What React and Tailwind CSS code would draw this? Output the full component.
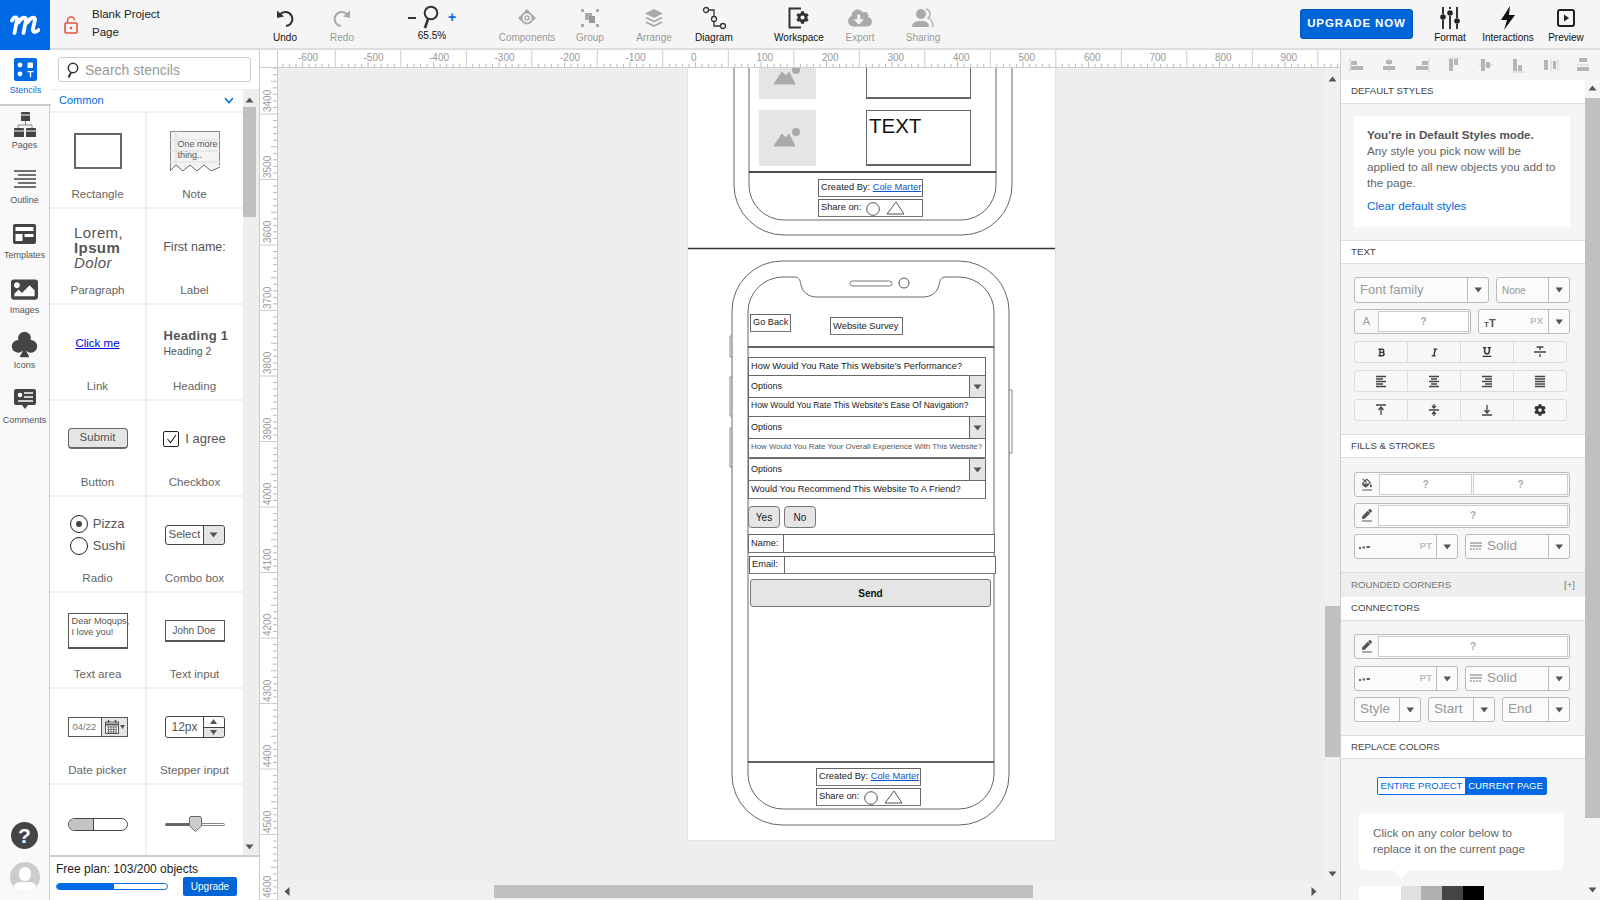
import React from 'react';
import { FaImage, FaCloudDownloadAlt, FaCog, FaFillDrip, FaPen, FaBold, FaItalic, FaUnderline } from 'react-icons/fa';
import { BsSuitClubFill } from 'react-icons/bs';

const Tri = ({ down, className = '' }) => (
  <svg width="9" height="6" viewBox="0 0 9 6" className={className}>
    <polygon points={down ? '0.5,0.5 8.5,0.5 4.5,5.5' : '0.5,5.5 8.5,5.5 4.5,0.5'} fill="#555" />
  </svg>
);

const ToolItem = ({ label, className = '', dim, icon }) => (
  <div className={`w-14 shrink-0 flex flex-col items-center ${className}`}>
    <div className="h-[28px] flex items-center justify-center">{icon}</div>
    <span className={`text-[10px] leading-[12px] whitespace-nowrap ${dim ? 'text-[#999]' : 'text-[#111]'}`}>{label}</span>
  </div>
);

const RailItem = ({ label, icon, active }) => (
  <div className={`flex flex-col items-center ${active ? 'h-[56px] pt-[4px] bg-white w-[51px] border-b-2 border-[#ccc] relative z-10' : 'h-[55px] pt-[3px]'}`}>
    <div className="h-[30px] flex items-center justify-center">{icon}</div>
    <span className={`text-[9px] leading-[12px] ${active ? 'text-[#0069e5]' : 'text-[#555]'}`}>{label}</span>
  </div>
);

const Cell = ({ label, children, right }) => (
  <div className={`h-24 shrink-0 flex flex-col items-center border-b-2 border-[#f0f0f0] ${right ? 'w-[96px] pr-[1px]' : 'w-[97px] border-r-2'}`}>
    <div className="h-[73px] pt-[4px] w-full flex items-center justify-center">{children}</div>
    <span className="text-[11.6px] leading-[16px] text-[#666]">{label}</span>
  </div>
);

const Header = ({ children, className = '' }) => (
  <div className={`h-[24px] shrink-0 bg-white border-y border-[#ddd] pl-[10px] flex items-center text-[9.7px] text-[#444] ${className}`}>{children}</div>
);

const Arrow = () => <svg width="9" height="6" viewBox="0 0 9 6"><polygon points="0.5,0.5 8,0.5 4.2,5.5" fill="#555" /></svg>;

const Drop = ({ className = '', arrow = 'w-[21px]', children }) => (
  <div className={`flex items-center h-full bg-[#fbfbfb] border border-[#bbb] rounded-[3px] ${className}`}>
    <div className="flex-1 min-w-0 h-full flex items-center">{children}</div>
    <div className={`h-full border-l border-[#bbb] flex items-center justify-center ${arrow}`}><Arrow /></div>
  </div>
);

const Swatch = ({ className = '' }) => (
  <div className={`h-[21px] bg-white border border-[#ccc] flex items-center justify-center text-[10px] font-bold text-[#aaa] ${className}`}>?</div>
);

const FormatRow = ({ icons, className = '' }) => (
  <div className={`ml-[13px] w-[213px] h-[22px] flex border border-[#ddd] rounded-[3px] bg-[#f7f7f7] ${className}`}>
    {icons.map((ic, i) => (
      <div key={i} className={`flex-1 flex items-center justify-center text-[#333] ${i ? 'border-l border-[#ddd]' : ''}`}>{ic}</div>
    ))}
  </div>
);

const L = ({ d }) => <svg width="14" height="14" viewBox="0 0 14 14"><path d={d} stroke="#444" strokeWidth="1.3" fill="none" /></svg>;

const AlignIcon = ({ d, bars }) => (
  <svg width="16" height="16" viewBox="0 0 16 16" className="shrink-0">
    <path d={d} stroke="#ddd" strokeWidth="1.4" fill="none" />
    <path d={bars} fill="#b5b5b5" />
  </svg>
);

const PtIcon = () => <svg width="12" height="4" viewBox="0 0 12 4"><path d="M0 3H2M3.500 2.500H6M7.500 2H11" stroke="#666" strokeWidth="2" /></svg>;
const SolidIcon = () => <svg width="12" height="9" viewBox="0 0 12 9"><path d="M0 1H12M0 4H12" stroke="#777" /><path d="M0 7H12" stroke="#777" strokeDasharray="2 1" /></svg>;
const PenSlot = () => <div className="w-[23px] flex justify-center"><div className="border-b-2 border-[#aaa] pb-[1px] leading-none"><FaPen size={10} color="#555" /></div></div>;

const Ruler = () => {
  const ticks = [];
  for (let i = -62; i <= 100; i++) ticks.push(411 + i * 6.55);
  const labels = [];
  for (let v = -600; v <= 900; v += 100) labels.push(v);
  return (
    <div className="relative h-[18px] flex-1 bg-white border-b border-[#ccc] overflow-hidden">
      <svg width="1063" height="18" className="absolute left-0 top-0">
        {ticks.map((x, i) => (
          <line key={i} x1={x} x2={x} y1={(i + 2) % 10 === 0 ? 0 : (i + 2) % 5 === 0 ? 12 : 14} y2="18" stroke={(i + 2) % 10 === 0 ? '#ccc' : '#bbb'} />
        ))}
      </svg>
      {labels.map((v) => (
        <span key={v} className="absolute top-[1px] text-[10px] leading-[14px] text-[#999]" style={{ left: 411 + v * 0.655 + 2 }}>{v}</span>
      ))}
    </div>
  );
};

const VRuler = () => {
  const ticks = [];
  for (let i = -60; i <= 100; i++) ticks.push(308 + i * 6.55);
  const labels = [];
  for (let v = 3400; v <= 4600; v += 100) labels.push(v);
  return (
    <div className="relative w-[19px] shrink-0 bg-white border-x border-[#ccc] overflow-hidden">
      <svg width="19" height="832" className="absolute left-0 top-0">
        {ticks.map((y, i) => (
          <line key={i} y1={y} y2={y} x1={i % 10 === 0 ? 0 : i % 5 === 0 ? 11 : 13} x2="18" stroke={i % 10 === 0 ? '#ccc' : '#bbb'} />
        ))}
      </svg>
      {labels.map((v) => (
        <span key={v} className="absolute left-[1px] text-[10px] leading-[14px] text-[#999] [writing-mode:vertical-rl] rotate-180 -translate-y-full" style={{ top: 308 + (v - 3800) * 0.655 - 2 }}>{v}</span>
      ))}
    </div>
  );
};

const wb = 'absolute bg-white border border-[#666] border-b-[#777] flex items-center text-[#222] whitespace-nowrap';

const Opt = ({ className }) => (
  <div className={`${wb} pl-[2px] text-[9px] rounded-[2px] ${className}`}>
    Options
    <div className="absolute right-0 top-0 bottom-0 w-[16px] bg-[#e5e5e5] border-l border-[#666] flex items-center justify-center"><Tri down /></div>
  </div>
);

const Footer = ({ a, b }) => (
  <>
    <div className={`${wb} pl-[2px] w-[105px] h-[18px] text-[9.3px] ${a}`}>
      Created By:&nbsp;<span className="text-[#0b57d0] underline">Cole Marter</span>
    </div>
    <div className={`${wb} pl-[2px] w-[105px] h-[18px] text-[9.3px] ${b}`}>
      Share on:
      <svg width="46" height="16" className="ml-[4px]" viewBox="0 0 46 16">
        <circle cx="8" cy="9" r="6.3" fill="none" stroke="#555" />
        <polygon points="31,2 39,14 22,14" fill="none" stroke="#555" />
      </svg>
    </div>
  </>
);

const Mountain = () => (
  <svg width="27" height="20" viewBox="0 0 27 20"><path d="M0 18 L8 6 L12 10 L15 6 L21 18Z" fill="#aaa" stroke="#aaa" strokeLinejoin="round" /><circle cx="22" cy="4" r="4" fill="#aaa" /></svg>
);

export default function App() {
  return (
    <div className="w-[1600px] h-[900px] overflow-hidden flex flex-col bg-[#eee] [font-family:'Liberation_Sans',Arial,sans-serif]">
      {/* top bar */}
      <div className="h-[50px] shrink-0 bg-[#f5f5f5] border-b-2 border-[#ddd] flex items-start">
        <div className="w-[50px] h-[50px] shrink-0 bg-[#0069e5] flex items-center justify-center">
          <svg width="30" height="20" viewBox="0 0 30 20"><path d="M2 5.500C4 1.500 7.500 1.500 7 5L4.500 18M8.500 7.500C11 2.500 16.500 1 16 5L13.500 18M17.500 7.500C20 2.500 25.500 1 25 5L23 13.500C22.500 17.500 25.500 18 28.500 15" fill="none" stroke="#fff" strokeWidth="3.800" strokeLinecap="round" /></svg>
        </div>
        <div className="w-[42px] h-[50px] flex items-center justify-center shrink-0">
          <svg width="14" height="18" viewBox="0 0 14 18"><path d="M3.500 7V4.500a3.500 3.500 0 0 1 7 0" fill="none" stroke="#e5533d" strokeWidth="1.500" /><rect x="1" y="7" width="12" height="10" rx="1" fill="none" stroke="#e5533d" strokeWidth="1.600" /><circle cx="7" cy="12" r="1.300" fill="#e5533d" /></svg>
        </div>
        <div className="w-[165px] shrink-0 pt-[5px] text-[11.5px] leading-[18px] text-[#222]">Blank Project<br />Page</div>
        <ToolItem label="Undo" className="mt-[4px]" icon={<svg width="22" height="20" viewBox="0 0 22 20"><path d="M6 6.500A7 7 0 1 1 12 18" fill="none" stroke="#333" strokeWidth="2" /><polygon points="3,2.500 3,10 10,8.500" fill="#333" /></svg>} />
        <ToolItem label="Redo" dim className="mt-[4px] ml-[1px]" icon={<svg width="22" height="20" viewBox="0 0 22 20"><path d="M16 6.500A7 7 0 1 0 10 18" fill="none" stroke="#aaa" strokeWidth="2" /><polygon points="19,2.500 19,10 12,8.500" fill="#aaa" /></svg>} />
        <div className="w-[60px] ml-[32px] shrink-0 flex flex-col items-center mt-[2px]">
          <div className="h-[30px] flex items-center gap-[5px]">
            <div className="w-[8px] h-[2px] bg-[#333] mt-[1px]" />
            <svg width="18" height="26" viewBox="0 0 18 26"><circle cx="10" cy="9" r="6.300" fill="none" stroke="#333" strokeWidth="2" /><path d="M7 15L4 24" stroke="#333" strokeWidth="2.600" /></svg>
            <span className="text-[#0069e5] text-[14px] leading-none font-bold ml-[4px]">+</span>
          </div>
          <span className="text-[10px] leading-[12px] text-[#111] -mt-[2px]">65.5%</span>
        </div>
        <ToolItem label="Components" dim className="mt-[4px] ml-[37px]" icon={<svg width="20" height="20" viewBox="0 0 20 20"><circle cx="10" cy="10" r="5.500" fill="none" stroke="#aaa" strokeWidth="2" /><circle cx="10" cy="10" r="2" fill="none" stroke="#aaa" strokeWidth="1.500" /><path d="M1 10l3-3v6zM19 10l-3-3v6zM10 1l3 3h-6z" fill="#aaa" /></svg>} />
        <ToolItem label="Group" dim className="mt-[4px] ml-[7px]" icon={<svg width="18" height="18" viewBox="0 0 18 18" fill="#aaa"><rect x="0" y="0" width="3" height="3" /><rect x="15" y="0" width="3" height="3" /><rect x="0" y="15" width="3" height="3" /><rect x="15" y="15" width="3" height="3" /><rect x="4" y="4" width="7" height="7" /><rect x="8" y="7" width="6" height="7" fill="#999" /></svg>} />
        <ToolItem label="Arrange" dim className="mt-[4px] ml-[8px]" icon={<svg width="18" height="19" viewBox="0 0 18 19" fill="#aaa"><path d="M9 0L18 4.500L9 9L0 4.500Z" /><path d="M2 8L9 11.500L16 8L18 9L9 13.500L0 9Z" /><path d="M2 12.500L9 16L16 12.500L18 13.500L9 18L0 13.500Z" /></svg>} />
        <ToolItem label="Diagram" className="mt-[4px] ml-[4px]" icon={<svg width="24" height="24" viewBox="0 0 24 24"><circle cx="4" cy="4" r="2.500" fill="none" stroke="#333" strokeWidth="1.300" /><circle cx="12" cy="13" r="2.500" fill="none" stroke="#333" strokeWidth="1.300" /><circle cx="21" cy="20" r="2.500" fill="none" stroke="#333" strokeWidth="1.300" /><path d="M6.500 4H12V10.500M12 15.500V20H18.500" fill="none" stroke="#333" strokeWidth="1.300" /></svg>} />
        <ToolItem label="Workspace" className="mt-[4px] ml-[29px]" icon={<div className="relative"><svg width="22" height="22" viewBox="0 0 22 22"><path d="M13 1.500H1.500V20.500H13" fill="none" stroke="#333" strokeWidth="2" /></svg><FaCog size={13} color="#333" className="absolute left-[8px] top-[4px]" /></div>} />
        <ToolItem label="Export" dim className="mt-[4px] ml-[5px]" icon={<FaCloudDownloadAlt size={24} color="#aaa" />} />
        <ToolItem label="Sharing" dim className="mt-[4px] ml-[7px]" icon={<svg width="22" height="22" viewBox="0 0 22 22" fill="#aaa"><circle cx="9" cy="7" r="5" /><path d="M0 20c0-5 4-6 9-6s8 1 8 6z" /><path d="M14 2a5 5 0 0 1 2 9c3 1 5 4 5 9" fill="none" stroke="#aaa" strokeWidth="1.300" /></svg>} />
        <div className="w-[113px] ml-[349px] mt-[9px] h-[30px] shrink-0 rounded-[3px] bg-[#0065d6] border border-[#0058c0] flex items-center justify-center text-white text-[11.5px] font-bold tracking-[0.9px]">UPGRADE&nbsp;NOW</div>
        <ToolItem label="Format" className="mt-[4px] ml-[9px]" icon={<svg width="20" height="22" viewBox="0 0 20 22"><path d="M3 0V7M3 13V22M10 0V2M10 9V22M17 0V11M17 17V22" stroke="#222" strokeWidth="1.800" /><circle cx="3" cy="10" r="2.800" fill="#222" /><circle cx="10" cy="6" r="2.800" fill="#222" /><circle cx="17" cy="14" r="2.800" fill="#222" /></svg>} />
        <ToolItem label="Interactions" className="mt-[4px] ml-[2px]" icon={<svg width="16" height="24" viewBox="0 0 16 24"><polygon points="10,0 1,14 7,14 4,24 15,9 9,9" fill="#111" /></svg>} />
        <ToolItem label="Preview" className="mt-[4px] ml-[2px]" icon={<svg width="20" height="20" viewBox="0 0 20 20"><rect x="2" y="2" width="16" height="16" rx="2" fill="none" stroke="#222" strokeWidth="2" /><polygon points="8,6.500 13,10 8,13.500" fill="#222" /></svg>} />
      </div>

      <div className="flex-1 min-h-0 flex">
        {/* rail */}
        <div className="w-[50px] shrink-0 bg-[#f9f9f9] border-r border-[#ccc] flex flex-col items-stretch">
          <RailItem active label="Stencils" icon={<svg width="23" height="23" viewBox="0 0 23 23"><rect width="23" height="23" rx="2" fill="#0069e5" /><circle cx="6" cy="7" r="2.400" fill="#fff" /><rect x="13.500" y="4.500" width="5.500" height="5.500" rx="1" fill="#fff" /><circle cx="6" cy="16" r="2.400" fill="#fff" /><path d="M13.500 13h6v1.200h-2.300v5h-1.400v-5h-2.300z" fill="#fff" /></svg>} />
          <RailItem label="Pages" icon={<svg width="24" height="25" viewBox="0 0 24 25"><path d="M9 0H16a1 1 0 0 1 1 1V9H8V1a1 1 0 0 1 1-1Z" fill="#444" /><path d="M8 3H17" stroke="#fff" /><path d="M12.500 9V13M5 16V13H19V16" fill="none" stroke="#888" /><path d="M2 16H10a1 1 0 0 1 1 1V25H1V17a1 1 0 0 1 1-1ZM14 16H22a1 1 0 0 1 1 1V25H13V17a1 1 0 0 1 1-1Z" fill="#444" /><path d="M1 19H11M13 19H23" stroke="#fff" /></svg>} />
          <RailItem label="Outline" icon={<svg width="24" height="18" viewBox="0 0 24 18"><path d="M1 1H23M5 5H23M1 9H23M5 13H23M1 17H23" stroke="#444" strokeWidth="1.600" /></svg>} />
          <RailItem label="Templates" icon={<svg width="23" height="20" viewBox="0 0 23 20"><rect width="23" height="20" rx="2" fill="#444" /><rect x="2.500" y="3" width="18" height="4" fill="#fff" /><rect x="2.500" y="10" width="7" height="7" fill="#fff" /><rect x="11.500" y="10" width="9" height="3" fill="#fff" /></svg>} />
          <RailItem label="Images" icon={<FaImage size={27} color="#444" />} />
          <RailItem label="Icons" icon={<BsSuitClubFill size={29} color="#444" />} />
          <RailItem label="Comments" icon={<svg width="22" height="21" viewBox="0 0 22 21"><path d="M2 0H20a2 2 0 0 1 2 2V14a2 2 0 0 1-2 2H14L11 20L8 16H2a2 2 0 0 1-2-2V2a2 2 0 0 1 2-2Z" fill="#444" /><circle cx="6" cy="6" r="2.300" fill="#fff" /><path d="M10 4H19M10 8H19M4 12H19" stroke="#fff" strokeWidth="1.500" /></svg>} />
          <div className="flex-1" />
          <div className="w-[27px] h-[27px] mx-auto rounded-full bg-[#444] text-white text-[21px] font-bold flex items-center justify-center">?</div>
          <div className="w-[30px] h-[30px] mx-auto mt-[13px] mb-[8px] rounded-full bg-[#ccc] overflow-hidden relative">
            <div className="absolute left-[9px] top-[5px] w-[12px] h-[14px] rounded-full bg-white" />
            <div className="absolute left-[3px] top-[20px] w-[24px] h-[14px] rounded-full bg-white" />
          </div>
        </div>

        {/* stencils */}
        <div className="w-[209px] shrink-0 bg-white flex flex-col">
          <div className="h-[40px] shrink-0 pl-[8px] pt-[7px] border-b border-[#eee]">
            <div className="w-[193px] h-[25px] border border-[#ccc] rounded-[3px] flex items-center pl-[6px] gap-[6px] pt-[1px] text-[14px] text-[#999]">
              <svg width="14" height="16" viewBox="0 0 14 16"><circle cx="8" cy="6" r="4.700" fill="none" stroke="#333" strokeWidth="1.500" /><path d="M6 10.500L3.500 15.500" stroke="#333" strokeWidth="2" /></svg>
              Search stencils
            </div>
          </div>
          <div className="flex-1 min-h-0 flex">
            <div className="w-[193px] shrink-0 overflow-hidden flex flex-col">
              <div className="h-[23px] shrink-0 pl-[9px] pr-[9px] flex items-center justify-between border-b-2 border-[#f0f0f0] text-[11px] text-[#0069e5]">
                Common
                <svg width="10" height="7" viewBox="0 0 10 7"><path d="M1 1L5 5.500L9 1" fill="none" stroke="#0069e5" strokeWidth="1.500" /></svg>
              </div>
              <div className="flex flex-wrap flex-1 min-h-0 w-[193px]">
                <Cell label="Rectangle"><div className="w-[48px] h-[36px] border-2 border-[#666] bg-white -mt-[1px]" /></Cell>
                <Cell right label="Note">
                  <div className="relative w-[50px] h-[40px] -mt-[1px]">
                    <svg width="50" height="40" viewBox="0 0 50 40" className="absolute inset-0"><path d="M0.500 40V0.500H49.500V40" fill="#f3f3f3" stroke="#888" /><path d="M0 9H50M0 20H50M0 31H50M6 0V36" stroke="#ddd" /><path d="M0 40L6 34L13 40L20 34L27 40L34 34L41 40L50 34V41H0Z" fill="#fff" /><path d="M0 40L6 34L13 40L20 34L27 40L34 34L41 40L50 36" fill="none" stroke="#666" /></svg>
                    <div className="absolute left-[8px] top-[8px] text-[9px] leading-[11px] text-[#555]">One more<br />thing..</div>
                  </div>
                </Cell>
                <Cell label="Paragraph">
                  <div className="text-[15px] leading-[15px] tracking-[0.4px] text-[#555] w-[47px] whitespace-nowrap">Lorem,<br /><b>Ipsum</b><br /><i>Dolor</i></div>
                </Cell>
                <Cell right label="Label"><span className="text-[12.500px] text-[#555]">First name:</span></Cell>
                <Cell label="Link"><span className="text-[11.500px] text-[#0000ee] underline">Click me</span></Cell>
                <Cell right label="Heading">
                  <div className="w-[62px] whitespace-nowrap text-[#555] -mt-[1px]"><div className="text-[13px] leading-[17px] font-bold tracking-[0.3px]">Heading 1</div><div className="text-[10.500px] leading-[15px]">Heading 2</div></div>
                </Cell>
                <Cell label="Button"><div className="w-[60px] h-[21px] rounded-[4px] bg-[#e5e5e5] border border-[#666] border-b-2 flex items-center justify-center text-[11.500px] text-[#555] -mt-[2px]">Submit</div></Cell>
                <Cell right label="Checkbox">
                  <div className="flex items-center gap-[6px] -mt-[1px]">
                    <div className="w-[16px] h-[16px] border border-[#222] rounded-[2px] flex items-center justify-center"><svg width="11" height="10" viewBox="0 0 11 10"><path d="M1.500 5L4.500 8.500L10 1" fill="none" stroke="#222" strokeWidth="1.100" /></svg></div>
                    <span className="text-[13px] text-[#555]">I agree</span>
                  </div>
                </Cell>
                <Cell label="Radio">
                  <div className="flex flex-col gap-[4px] -mt-[1px] text-[13px] text-[#555] leading-[18px]">
                    <div className="flex items-center gap-[5px]"><div className="w-[18px] h-[18px] rounded-full border border-[#222] flex items-center justify-center"><div className="w-[6px] h-[6px] rounded-full bg-[#444]" /></div>Pizza</div>
                    <div className="flex items-center gap-[5px]"><div className="w-[18px] h-[18px] rounded-full border border-[#222]" />Sushi</div>
                  </div>
                </Cell>
                <Cell right label="Combo box">
                  <div className="w-[60px] h-[20px] border border-[#444] rounded-[3px] flex items-center text-[11.500px] text-[#555] pl-[3px] relative -mt-[2px]">Select
                    <div className="absolute right-0 top-0 bottom-0 w-[21px] bg-[#e5e5e5] border-l border-[#444] rounded-r-[3px] flex items-center justify-center"><Tri down /></div>
                  </div>
                </Cell>
                <Cell label="Text area"><div className="w-[60px] h-[36px] border border-[#555] border-b-2 pl-[3px] pt-[2px] text-[9.200px] leading-[11px] text-[#555] whitespace-nowrap -mt-[1px]">Dear Moqups,<br />I love you!</div></Cell>
                <Cell right label="Text input"><div className="w-[60px] h-[22px] border border-[#555] border-b-2 pl-[7px] flex items-center text-[10px] text-[#555] -mt-[1px]">John Doe</div></Cell>
                <Cell label="Date picker">
                  <div className="w-[60px] h-[20px] border border-[#555] flex items-center text-[9.500px] text-[#777] pl-[4px] relative -mt-[1px]">04/22
                    <div className="absolute right-0 top-0 bottom-0 w-[26px] bg-[#e5e5e5] border-l border-[#555] flex items-center pl-[3px] gap-[1px]">
                      <svg width="14" height="14" viewBox="0 0 14 14"><rect x="0.500" y="2" width="13" height="11.500" fill="#fff" stroke="#555" /><path d="M0 4.500H14" stroke="#555" strokeWidth="2" /><path d="M3.500 0V3M10.500 0V3" stroke="#555" strokeWidth="1.500" /><path d="M2 7H12M2 9.500H12M2 12H12M3.500 6V13M6 6V13M8.500 6V13M11 6V13" stroke="#777" /></svg>
                      <svg width="5" height="4" viewBox="0 0 5 4"><polygon points="0,0 5,0 2.500,4" fill="#555" /></svg>
                    </div>
                  </div>
                </Cell>
                <Cell right label="Stepper input">
                  <div className="w-[60px] h-[22px] border border-[#444] rounded-[3px] flex items-center text-[12px] text-[#555] pl-[6px] relative -mt-[1px]">12px
                    <div className="absolute right-0 top-0 bottom-0 w-[21px] bg-[#e5e5e5] border-l border-[#444] rounded-r-[3px] flex flex-col">
                      <div className="flex-1 bg-white rounded-tr-[3px] border-b border-[#444] flex items-center justify-center"><svg width="7" height="5" viewBox="0 0 7 5"><polygon points="0,5 7,5 3.500,0" fill="#555" /></svg></div>
                      <div className="flex-1 flex items-center justify-center"><svg width="7" height="5" viewBox="0 0 7 5"><polygon points="0,0 7,0 3.500,5" fill="#555" /></svg></div>
                    </div>
                  </div>
                </Cell>
                <Cell label="">
                  <div className="w-[60px] h-[13px] border border-[#444] rounded-full overflow-hidden mt-[1px]"><div className="w-[25px] h-full bg-[#c4c4c4] border-r border-[#444]" /></div>
                </Cell>
                <Cell right label="">
                  <div className="relative w-[60px] h-[16px] flex items-center mt-[1px]">
                    <div className="w-[30px] h-[3px] bg-[#666] rounded-l-full" />
                    <div className="flex-1 h-[3px] border border-[#888] rounded-r-full" />
                    <svg width="13" height="16" viewBox="0 0 13 16" className="absolute left-[24px] top-0"><path d="M1.500 0.500H11.500L12.500 2V10L6.500 15.500L0.500 10V2Z" fill="#ccc" stroke="#666" /></svg>
                  </div>
                </Cell>
              </div>
              <div className="h-[45px] shrink-0" />
            </div>
            <div className="w-[16px] shrink-0 bg-[#eee] flex flex-col items-start relative">
              <Tri className="mt-[7px] ml-[2px]" />
              <div className="w-[13px] h-[110px] bg-[#c0c0c0] mt-[4px]" />
              <div className="flex-1" />
              <Tri down className="mb-[50px] ml-[2px]" />
              <div className="absolute bottom-0 left-0 right-0 h-[45px] bg-white" />
            </div>
          </div>
          <div className="relative h-0">
            <div className="absolute left-0 right-0 bottom-0 h-[45px] bg-white border-t-2 border-[#ccc] pl-[6px] pt-[4px]">
              <div className="text-[12px] leading-[16px] text-[#222]">Free plan: 103/200 objects</div>
              <div className="flex items-center">
                <div className="w-[112px] h-[7px] border border-[#0069e5] rounded-full overflow-hidden"><div className="w-[57px] h-full bg-[#0069e5]" /></div>
                <div className="w-[54px] h-[19px] ml-[15px] rounded-[2px] bg-[#0065d6] text-white text-[10px] flex items-center justify-center">Upgrade</div>
              </div>
            </div>
          </div>
        </div>

        {/* center */}
        <div className="flex-1 min-w-0 flex flex-col border-r border-[#ccc]">
          <div className="flex h-[18px] shrink-0">
            <div className="w-[19px] shrink-0 bg-white border-x border-b border-[#ccc]" />
            <Ruler />
          </div>
          <div className="flex-1 min-h-0 flex">
            <VRuler />
            <div className="flex-1 min-w-0 relative overflow-hidden bg-[#eee]">
              {/* page */}
              <div className="absolute left-[410px] top-0 w-[367px] h-[772px] bg-white shadow-[0_0_2px_#ccc]">
                <svg width="367" height="772" className="absolute inset-0">
                  <path d="M46 0V117a50 50 0 0 0 50 50H274a50 50 0 0 0 50-50V0" fill="none" stroke="#666" />
                  <path d="M61 0V117a35 35 0 0 0 35 35H273a35 35 0 0 0 35-35V0" fill="none" stroke="#666" />
                  <path d="M61 104H308" stroke="#111" strokeWidth="1.300" />
                  <path d="M0 180.500H367" stroke="#333" strokeWidth="1.500" />
                  <path d="M94 193H271a50 50 0 0 1 50 50V707a50 50 0 0 1-50 50H94a50 50 0 0 1-50-50V243a50 50 0 0 1 50-50Z" fill="none" stroke="#666" />
                  <path d="M44 268H42V289H44M44 309H42V348H44M44 360H42V399H44M321 322H324V385H321" fill="none" stroke="#888" />
                  <path d="M95 209H106c6 0 6 4 7 8c2 8 8 12 16 12H235c8 0 14-4 16-12c1-4 1-8 7-8H271a35 35 0 0 1 35 35V706a35 35 0 0 1-35 35H95a35 35 0 0 1-35-35V244a35 35 0 0 1 35-35Z" fill="none" stroke="#666" />
                  <rect x="162" y="213" width="42" height="5" rx="2.500" fill="none" stroke="#777" />
                  <circle cx="216" cy="215" r="5" fill="none" stroke="#555" />
                  <path d="M60 279H306M60 694H306" stroke="#333" strokeWidth="1.300" />
                </svg>
                <div className="absolute left-[71px] top-0 w-[57px] h-[31px] bg-[#e5e5e5] overflow-hidden flex justify-center"><div className="-mt-[2px] h-[20px]"><Mountain /></div></div>
                <div className="absolute left-[71px] top-[42px] w-[57px] h-[56px] bg-[#e5e5e5] flex items-center justify-center"><Mountain /></div>
                <div className="absolute left-[178px] -top-[2px] w-[105px] h-[33px] border border-[#666] border-b-2 bg-white" />
                <div className="absolute left-[178px] top-[42px] w-[105px] h-[56px] border border-[#666] border-b-2 bg-white pl-[2px] pt-[2px] text-[20.500px] leading-[26px] text-[#111]">TEXT</div>
                <Footer a="left-[130px] top-[111px]" b="left-[130px] top-[131px]" />

                <div className={`${wb} left-[62px] top-[246px] w-[41px] h-[18px] pl-[2px] text-[9.200px]`}>Go Back</div>
                <div className={`${wb} left-[142px] top-[249px] w-[73px] h-[18px] pl-[2px] text-[9.400px]`}>Website Survey</div>
                <div className={`${wb} left-[60px] top-[289px] w-[238px] h-[19px] pl-[2px] text-[9.300px]`}>How Would You Rate This Website's Performance?</div>
                <Opt className="left-[60px] top-[307px] w-[238px] h-[23px]" />
                <div className={`${wb} left-[60px] top-[329px] w-[238px] h-[20px] pl-[2px] pb-[3px] text-[8.500px]`}>How Would You Rate This Website's Ease Of Navigation?</div>
                <Opt className="left-[60px] top-[348px] w-[238px] h-[23px]" />
                <div className={`${wb} left-[60px] top-[370px] w-[238px] h-[20px] pl-[2px] pb-[2px] text-[7.900px] text-[#555]`}>How Would You Rate Your Overall Experience With This Website?</div>
                <Opt className="left-[60px] top-[390px] w-[238px] h-[23px]" />
                <div className={`${wb} left-[60px] top-[412px] w-[238px] h-[19px] pl-[2px] text-[9.300px]`}>Would You Recommend This Website To A Friend?</div>
                <div className="absolute left-[60px] top-[438px] w-[32px] h-[22px] rounded-[4px] bg-[#e5e5e5] border border-[#777] flex items-center justify-center text-[10px] text-[#222]">Yes</div>
                <div className="absolute left-[96px] top-[438px] w-[32px] h-[22px] rounded-[4px] bg-[#e5e5e5] border border-[#777] flex items-center justify-center text-[10px] text-[#222]">No</div>
                <div className={`${wb} left-[60px] top-[466px] w-[247px] h-[19px] pl-[2px] text-[9.300px]`}>Name:<div className="absolute left-[34px] top-0 bottom-0 border-l border-[#666]" /></div>
                <div className={`${wb} left-[61px] top-[488px] w-[247px] h-[18px] pl-[2px] text-[9.300px]`}>Email:<div className="absolute left-[34px] top-0 bottom-0 border-l border-[#666]" /></div>
                <div className="absolute left-[62px] top-[511px] w-[241px] h-[28px] rounded-[3px] bg-[#e5e5e5] border border-[#777] flex items-center justify-center text-[10px] font-bold text-[#111]">Send</div>
                <Footer a="left-[128px] top-[700px]" b="left-[128px] top-[720px]" />
              </div>

              {/* vertical scrollbar */}
              <div className="absolute right-0 top-0 bottom-0 w-[15px] bg-[#f0f0f0] flex flex-col items-center">
                <Tri className="mt-[8px]" />
                <div className="w-full h-[151px] bg-[#c0c0c0] mt-[524px]" />
                <div className="flex-1" />
                <Tri down className="mb-[23px]" />
              </div>
              {/* horizontal scrollbar */}
              <div className="absolute left-0 right-[15px] bottom-0 h-[17px] bg-[#f0f0f0] flex items-center">
                <svg width="6" height="9" viewBox="0 0 6 9" className="ml-[6px]"><polygon points="5.500,0 5.500,9 0.500,4.500" fill="#555" /></svg>
                <div className="h-[13px] w-[539px] bg-[#c0c0c0] ml-[204px]" />
                <div className="flex-1" />
                <svg width="6" height="9" viewBox="0 0 6 9" className="mr-[8px]"><polygon points="0.500,0 0.500,9 5.500,4.500" fill="#555" /></svg>
              </div>
            </div>
          </div>
        </div>

        {/* right panel */}
        <div className="w-[259px] shrink-0 bg-[#f5f5f5] flex flex-col">
          <div className="h-[30px] shrink-0 pl-[8px] flex items-center justify-between pr-[9px]">
            <AlignIcon d="M1 1V15" bars="M2 4H8V8H2ZM2 9H14V13H2Z" />
            <AlignIcon d="M8 1V15" bars="M5 3H11V7H5ZM2 9H14V13H2Z" />
            <AlignIcon d="M15 1V15" bars="M8 4H14V8H8ZM2 9H14V13H2Z" />
            <AlignIcon d="M1 1H15" bars="M3 2H7V14H3ZM8 2H12V8H8Z" />
            <AlignIcon d="M1 8H15" bars="M3 2H7V14H3ZM8 5H12V11H8Z" />
            <AlignIcon d="M1 15H15" bars="M3 2H7V14H3ZM8 8H12V14H8Z" />
            <AlignIcon d="M8 2V14M15 2V14" bars="M1 3H5V13H1ZM10 4H13V12H10Z" />
            <AlignIcon d="M2 8H14" bars="M4 1H12V5H4ZM2 10H14V14H2Z" />
          </div>
          <div className="flex-1 min-h-0 flex">
            <div className="w-[244px] shrink-0 overflow-hidden flex flex-col">
              <Header className="!border-t-0 h-[23px]">DEFAULT STYLES</Header>
              <div className="ml-[13px] mt-[12px] w-[216px] h-[111px] shrink-0 bg-white pl-[13px] pt-[11px] text-[11.700px] leading-[16px] text-[#666]">
                <b className="text-[#555]">You're in Default Styles mode.</b><br />Any style you pick now will be<br />applied to all new objects you add to<br />the page.
                <div className="text-[#0069e5] mt-[7px]">Clear default styles</div>
              </div>
              <Header className="mt-[13px]">TEXT</Header>
              <div className="ml-[13px] mt-[13px] h-[26px] shrink-0 flex gap-[7px]">
                <Drop className="w-[135px]"><span className="pl-[5px] text-[13px] text-[#999]">Font family</span></Drop>
                <Drop className="w-[74px]"><span className="pl-[5px] text-[10px] text-[#999]">None</span></Drop>
              </div>
              <div className="ml-[13px] mt-[6px] h-[25px] shrink-0 flex gap-[7px]">
                <div className="w-[117px] h-full border border-[#bbb] rounded-[3px] flex items-center bg-[#f9f9f9] pr-[1px]">
                  <span className="w-[23px] text-center text-[11px] text-[#999]">A</span>
                  <Swatch className="flex-1" />
                </div>
                <Drop className="w-[92px]"><div className="flex w-full items-center justify-between px-[5px]"><span className="font-bold text-[#555] leading-none"><span className="text-[8px]">T</span><span className="text-[11px]">T</span></span><span className="text-[9.500px] text-[#bbb] font-bold">PX</span></div></Drop>
              </div>
              <FormatRow className="mt-[7px] shrink-0" icons={[<FaBold size={9} />, <FaItalic size={9} />, <FaUnderline size={10} />, <L d="M1 7H13M3.500 2H10.500M7 2V5M7 9V12" />]} />
              <FormatRow className="mt-[7px] shrink-0" icons={[<L d="M2 2.500H12M2 5H9M2 7.500H12M2 10H9M2 12.500H12" />, <L d="M2 2.500H12M4 5H10M2 7.500H12M4 10H10M2 12.500H12" />, <L d="M2 2.500H12M5 5H12M2 7.500H12M5 10H12M2 12.500H12" />, <L d="M2 2.500H12M2 5H12M2 7.500H12M2 10H12M2 12.500H12" />]} />
              <FormatRow className="mt-[7px] shrink-0" icons={[<L d="M2 2H12M7 4V12M4.500 7L7 4L9.500 7" />, <L d="M2 7H12M7 1V5M7 9V13M5 3L7 5L9 3M5 11L7 9L9 11" />, <L d="M2 12H12M7 2V10M4.500 7L7 10L9.500 7" />, <FaCog size={12} />]} />
              <Header className="mt-[13px]">FILLS &amp; STROKES</Header>
              <div className="ml-[13px] mt-[14px] w-[216px] h-[25px] shrink-0 border border-[#bbb] rounded-[3px] flex items-center gap-[1px] pr-[1px] bg-[#f9f9f9]">
                <div className="w-[23px] flex justify-center"><div className="border-b-2 border-[#aaa] pb-[1px] leading-none"><FaFillDrip size={10} color="#555" /></div></div>
                <Swatch className="w-[93px]" /><Swatch className="flex-1" />
              </div>
              <div className="ml-[13px] mt-[6px] w-[216px] h-[25px] shrink-0 border border-[#bbb] rounded-[3px] flex items-center pr-[1px] bg-[#f9f9f9]">
                <PenSlot />
                <Swatch className="flex-1" />
              </div>
              <div className="ml-[13px] mt-[6px] h-[25px] shrink-0 flex gap-[7px]">
                <Drop className="w-[104px]"><div className="flex w-full items-center justify-between px-[4px]"><PtIcon /><span className="text-[9.500px] text-[#bbb] font-bold">PT</span></div></Drop>
                <Drop className="w-[105px]"><div className="flex items-center pl-[4px] gap-[5px] text-[13.500px] text-[#999]"><SolidIcon />Solid</div></Drop>
              </div>
              <div className="mt-[13px] h-[25px] shrink-0 bg-[#eee] border-t border-[#ddd] pl-[10px] pr-[10px] flex items-center justify-between text-[9.700px] text-[#777]">ROUNDED CORNERS<span>[+]</span></div>
              <Header className="!border-t-0">CONNECTORS</Header>
              <div className="ml-[13px] mt-[13px] w-[216px] h-[25px] shrink-0 border border-[#bbb] rounded-[3px] flex items-center pr-[1px] bg-[#f9f9f9]">
                <PenSlot />
                <Swatch className="flex-1" />
              </div>
              <div className="ml-[13px] mt-[7px] h-[25px] shrink-0 flex gap-[7px]">
                <Drop className="w-[104px]"><div className="flex w-full items-center justify-between px-[4px]"><PtIcon /><span className="text-[9.500px] text-[#bbb] font-bold">PT</span></div></Drop>
                <Drop className="w-[105px]"><div className="flex items-center pl-[4px] gap-[5px] text-[13.500px] text-[#999]"><SolidIcon />Solid</div></Drop>
              </div>
              <div className="ml-[13px] mt-[6px] h-[25px] shrink-0 flex gap-[7px] text-[13.500px] text-[#999]">
                <Drop className="w-[67px]"><span className="pl-[5px]">Style</span></Drop>
                <Drop className="w-[67px]"><span className="pl-[5px]">Start</span></Drop>
                <Drop className="w-[68px]"><span className="pl-[5px]">End</span></Drop>
              </div>
              <Header className="mt-[13px]">REPLACE COLORS</Header>
              <div className="ml-[36px] mt-[18px] w-[170px] h-[18px] shrink-0 flex border border-[#0069e5] rounded-[2px] text-[9.500px]">
                <div className="w-[87px] flex items-center justify-center text-[#0069e5] bg-white">ENTIRE PROJECT</div>
                <div className="flex-1 flex items-center justify-center text-white bg-[#0069e5]">CURRENT PAGE</div>
              </div>
              <div className="relative ml-[18px] mt-[18px] w-[205px] h-[57px] shrink-0 bg-white rounded-[6px] pl-[14px] pt-[12px] text-[11.700px] leading-[16px] text-[#666]">
                Click on any color below to<br />replace it on the current page
                <svg width="16" height="9" viewBox="0 0 16 9" className="absolute left-[34px] top-[57px]"><polygon points="0,0 16,0 8,9" fill="#fff" /></svg>
              </div>
              <div className="ml-[18px] mt-[16px] flex h-[20px] shrink-0">
                <div className="w-[42px] bg-white" /><div className="w-[20px] bg-[#e0e0e0]" /><div className="w-[21px] bg-[#b0b0b0]" /><div className="w-[21px] bg-[#444]" /><div className="w-[21px] bg-black" />
              </div>
            </div>
            <div className="w-[15px] shrink-0 flex flex-col items-center bg-[#f5f5f5]">
              <Tri className="mt-[5px]" />
              <div className="w-full h-[720px] mt-[7px] bg-[#c0c0c0]" />
              <div className="flex-1" />
              <Tri down className="mb-[7px]" />
            </div>
          </div>
        </div>
      </div>
    </div>
  );
}
